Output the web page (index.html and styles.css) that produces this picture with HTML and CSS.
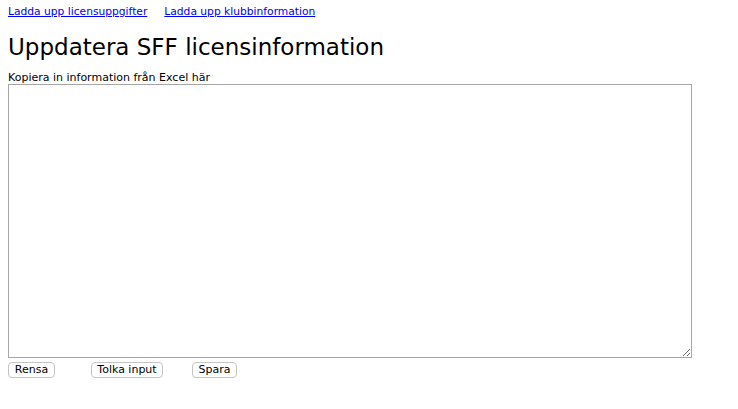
FILE: index.html
```html
<!DOCTYPE html>
<html lang="sv">
<head>
<meta charset="utf-8">
<title>Uppdatera SFF licensinformation</title>
<link rel="stylesheet" href="styles.css">
</head>
<body>
<div class="nav">
  <a href="#">Ladda upp licensuppgifter</a>
  <a href="#">Ladda upp klubbinformation</a>
</div>
<h1 class="title">Uppdatera SFF licensinformation</h1>
<label class="label" for="input">Kopiera in information från Excel här</label>
<textarea id="input" class="input"></textarea>
<div class="actions">
  <button class="btn btn-rensa">Rensa</button>
  <button class="btn btn-tolka">Tolka input</button>
  <button class="btn btn-spara">Spara</button>
</div>
</body>
</html>
```
FILE: styles.css
```css
html, body {
  margin: 0;
  padding: 0;
  background: #fff;
}
body {
  padding: 4px 8px;
  font-family: "DejaVu Sans", Verdana, sans-serif;
  font-size: 11px;
  color: #000;
}
.nav {
  display: flex;
  gap: 17px;
  height: 15px;
  line-height: 15px;
  font-size: 10.7px;
}
.nav a {
  color: #0000ee;
  text-decoration: underline;
}
.title {
  margin: 13px 0 0 0;
  font-size: 23px;
  font-weight: normal;
  line-height: 30px;
  height: 30px;
}
.label {
  display: block;
  margin-top: 10px;
  line-height: 12px;
  height: 12px;
}
.input {
  display: block;
  box-sizing: border-box;
  width: 684px;
  height: 274px;
  margin: 0;
  border: 1px solid #a6a6a6;
  padding: 2px;
  resize: both;
  font-family: "Liberation Mono", monospace;
}
.actions {
  display: flex;
  margin-top: 4px;
}
.btn {
  box-sizing: border-box;
  height: 16px;
  padding: 0;
  border: 1px solid #c4c4c4;
  border-radius: 4px;
  background: #fff;
  font-family: "DejaVu Sans", Verdana, sans-serif;
  font-size: 11px;
  line-height: 14px;
  white-space: nowrap;
  text-align: center;
  color: #000;
}
.btn-rensa { width: 47px; }
.btn-tolka { width: 72px; margin-left: 36px; }
.btn-spara { width: 45px; margin-left: 29px; }
```
